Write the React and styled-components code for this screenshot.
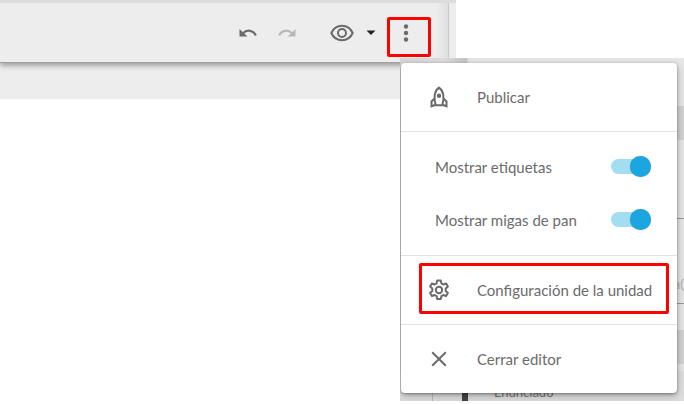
import React, { useState } from "react";
import styled, { createGlobalStyle, css } from "styled-components";

const GlobalStyle = createGlobalStyle`
  *, *::before, *::after { box-sizing: border-box; }
  body {
    margin: 0;
    background: #fff;
    color: #6b6b6b;
    font-family: Lato, "Open Sans", sans-serif;
    font-size: 15px;
  }
  button { font: inherit; color: inherit; border: 0; background: none; padding: 0; cursor: pointer; }
`;

const Page = styled.div`
  position: relative;
  min-height: 401px;
  overflow: hidden;
`;

const Header = styled.header`
  position: relative;
  display: flex;
  width: 66.67%;
  height: 63px;
  border-top: 3px solid #dcdcdc;
  border-bottom: 1px solid #a0a0a0;
  background: #ededed;
  box-shadow: 0 2px 6px rgba(0, 0, 0, 0.4);
  clip-path: inset(0 0 -12px 0);
`;

const Toolbar = styled.div`
  flex: 1;
  display: flex;
  align-items: center;
  justify-content: flex-end;
  padding-right: 17px;
  border-right: 1px solid #c8c8c8;
  background: linear-gradient(to left, #dfdfdf, #ededed 12px);
`;

const HeaderEdge = styled.div`
  width: 7px;
`;

const ToolButton = styled.button`
  display: flex;
  align-items: center;
  justify-content: center;
  width: 24px;
  height: 24px;
  margin-right: ${(p) => p.$gap || 0}px;
  color: ${(p) => (p.disabled ? "#b8b8b8" : "#6b6b6b")};
`;

const MoreButton = styled(ToolButton)`
  width: 44px;
  height: 40px;
  margin-top: 8px;
  padding-bottom: 7px;
  padding-right: 6px;
  border: 3px solid #fe0000;
  border-radius: 2px;
`;

const SubHeader = styled.div`
  width: 400px;
  height: 36px;
  background: #ededed;
`;

const SidePanel = styled.aside`
  position: absolute;
  top: 58px;
  right: 0;
  bottom: 0;
  width: 284px;
  overflow: hidden;
  background: linear-gradient(to right, #d6d6d6, #dedede 44px, #c4c4c4 67px, #e6e6e6 68px);
`;

const PanelContent = styled.div`
  display: flex;
  flex-direction: column;
  height: 100%;
  padding-left: 68px;
`;

const Strip = styled.div`
  height: 34px;
  background: #d2d2d2;
  margin-top: ${(p) => p.$top}px;
`;

const Field = styled.div`
  display: flex;
  align-items: flex-end;
  justify-content: flex-end;
  height: ${(p) => p.$height}px;
  padding-bottom: 10px;
  border-bottom: 1px solid #999;
  color: #b0b0b0;
  font-size: 14px;
  line-height: 18px;
`;

const Statement = styled.div`
  position: absolute;
  left: 0;
  right: 0;
  bottom: 0;
  display: flex;
  height: 30px;
  background: #dedede;
`;

const Rail = styled.div`
  width: 33px;
  border-right: 1px solid #b9b9b9;
`;

const Marker = styled.div`
  width: 6px;
  margin-left: 29px;
  background: #444;
`;

const StatementLabel = styled.div`
  flex: 1;
  padding: 13px 0 0 26px;
  color: #777;
  font-size: 13px;
  line-height: 16px;
`;

const Menu = styled.div`
  position: absolute;
  top: 5px;
  left: 1px;
  right: 7px;
  border-radius: 4px;
  background: #fff;
  box-shadow: 0 1px 3px rgba(0, 0, 0, 0.35), 0 3px 8px rgba(0, 0, 0, 0.25);
`;

const rowDivider = css`
  border-bottom: 1px solid #e2e2e2;
`;

const MenuItem = styled.button`
  display: flex;
  align-items: center;
  width: 100%;
  height: ${(p) => (p.$last ? 68 : 69)}px;
  padding-left: 26px;
  line-height: 20px;
  text-align: left;
  ${(p) => !p.$last && rowDivider}
`;

const ItemIcon = styled.span`
  display: flex;
  width: 24px;
  margin-right: 26px;
`;

const Highlight = styled.div`
  position: absolute;
  left: 18px;
  right: 8px;
  top: 200px;
  height: 51px;
  border: 3px solid #fe0000;
  border-radius: 2px;
  pointer-events: none;
`;

const ToggleGroup = styled.div`
  padding: 8px 0 9px;
  ${rowDivider}
`;

const ToggleRow = styled.label`
  display: flex;
  align-items: center;
  justify-content: space-between;
  height: 53px;
  padding: 0 26px 0 34px;
  cursor: pointer;
`;

const Switch = styled.input`
  appearance: none;
  display: flex;
  align-items: center;
  width: 40px;
  height: 15px;
  margin: 0;
  border-radius: 8px;
  background: ${(p) => (p.checked ? "#a3ddf2" : "#cccccc")};
  justify-content: ${(p) => (p.checked ? "flex-end" : "flex-start")};

  &::before {
    content: "";
    flex: none;
    width: 21px;
    height: 21px;
    border-radius: 50%;
    background: ${(p) => (p.checked ? "#1ba6e2" : "#f5f5f5")};
    box-shadow: 0 0 1px rgba(0, 0, 0, 0.4);
  }
`;

function UndoIcon({ flipped }) {
  return (
    <svg width="18" height="18" viewBox="0 0 18 18" fill="none" aria-hidden="true">
      <g transform={flipped ? "translate(18 0) scale(-1 1)" : undefined}>
        <path d="M0.500 5v7.500h8z" fill="currentColor" />
        <path d="M4 9.200C8 5.300 14.500 6 16.800 11.500" stroke="currentColor" strokeWidth="2.200" />
      </g>
    </svg>
  );
}

function EyeIcon() {
  return (
    <svg width="24" height="18" viewBox="0 0 24 18" fill="none" stroke="currentColor" strokeWidth="2" aria-hidden="true">
      <path d="M1.300 9C3.400 4.300 7.300 1.800 12 1.800S20.600 4.300 22.700 9C20.600 13.700 16.700 16.200 12 16.200S3.400 13.700 1.300 9z" />
      <circle cx="12" cy="9" r="4" />
    </svg>
  );
}

function CaretIcon() {
  return (
    <svg width="10" height="6" viewBox="0 0 10 6" aria-hidden="true">
      <path d="M0.500 0.500h9L5 5z" fill="#222" />
    </svg>
  );
}

function DotsIcon() {
  return (
    <svg width="6" height="20" viewBox="0 0 6 20" fill="currentColor" aria-hidden="true">
      <circle cx="3" cy="3.500" r="2.200" />
      <circle cx="3" cy="10" r="2.200" />
      <circle cx="3" cy="16.500" r="2.200" />
    </svg>
  );
}

function RocketIcon() {
  return (
    <svg width="24" height="24" viewBox="0 0 24 24" fill="none" stroke="currentColor" strokeWidth="2" aria-hidden="true">
      <path d="M8.800 20.200C6.400 13 7.200 5.800 12 2.600C16.800 5.800 17.600 13 15.200 20.200z" />
      <path d="M7.500 13.500L4.500 16.500V21.300L8.700 19.800M16.500 13.500L19.500 16.500V21.300L15.300 19.800" />
      <circle cx="12" cy="10.800" r="2.200" fill="currentColor" stroke="none" />
    </svg>
  );
}

function GearIcon() {
  return (
    <svg width="24" height="24" viewBox="0 0 24 24" fill="none" stroke="currentColor" strokeWidth="2" strokeLinejoin="round" aria-hidden="true">
      <path d="M10.200 2.500h3.600l.6 2.900 1.900 1.100 2.800-1 1.800 3.100-2.200 2v2.300l2.200 2-1.800 3.100-2.800-1-1.900 1.100-.6 2.900h-3.600l-.6-2.900-1.900-1.100-2.800 1-1.800-3.100 2.200-2v-2.300l-2.200-2 1.800-3.100 2.800 1 1.900-1.100z" />
      <circle cx="12" cy="12" r="3.200" />
    </svg>
  );
}

function CloseIcon() {
  return (
    <svg width="24" height="24" viewBox="0 0 24 24" fill="none" stroke="currentColor" strokeWidth="2" aria-hidden="true">
      <path d="M5.200 5.200l13.600 13.600M18.800 5.200L5.200 18.800" />
    </svg>
  );
}

export default function App() {
  const [labels, setLabels] = useState(true);
  const [crumbs, setCrumbs] = useState(true);

  return (
    <>
      <GlobalStyle />
      <Page>
        <Header>
          <Toolbar>
            <ToolButton $gap={15} aria-label="Deshacer"><UndoIcon /></ToolButton>
            <ToolButton $gap={31} disabled aria-label="Rehacer"><UndoIcon flipped /></ToolButton>
            <ToolButton $gap={5} aria-label="Vista previa"><EyeIcon /></ToolButton>
            <ToolButton $gap={4} aria-label="Opciones de vista"><CaretIcon /></ToolButton>
            <MoreButton aria-label="Más opciones"><DotsIcon /></MoreButton>
          </Toolbar>
          <HeaderEdge />
        </Header>
        <SubHeader />
        <SidePanel>
          <PanelContent>
            <Strip $top={48} />
            <Field $height={79} />
            <Field $height={85}>a(</Field>
            <Strip $top={26} />
          </PanelContent>
          <Statement>
            <Rail />
            <Marker />
            <StatementLabel>Enunciado</StatementLabel>
          </Statement>
          <Menu>
            <MenuItem>
              <ItemIcon><RocketIcon /></ItemIcon>
              Publicar
            </MenuItem>
            <ToggleGroup>
              <ToggleRow>
                Mostrar etiquetas
                <Switch type="checkbox" checked={labels} onChange={() => setLabels(!labels)} />
              </ToggleRow>
              <ToggleRow>
                Mostrar migas de pan
                <Switch type="checkbox" checked={crumbs} onChange={() => setCrumbs(!crumbs)} />
              </ToggleRow>
            </ToggleGroup>
            <MenuItem>
              <ItemIcon><GearIcon /></ItemIcon>
              Configuración de la unidad
            </MenuItem>
            <MenuItem $last>
              <ItemIcon><CloseIcon /></ItemIcon>
              Cerrar editor
            </MenuItem>
            <Highlight />
          </Menu>
        </SidePanel>
      </Page>
    </>
  );
}
